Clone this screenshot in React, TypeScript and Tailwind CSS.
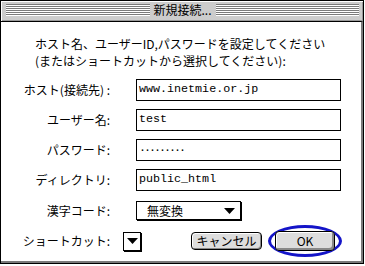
import React from "react";

function Stripes() {
  return (
    <div className="flex-1 flex flex-col">
      {[0, 1, 2, 3, 4, 5].map((i) => (
        <div key={i} className="h-[2px] border-t border-b border-t-[#7a7a7a] border-b-white" />
      ))}
    </div>
  );
}

function Tri({ w = 11, h = 6 }: { w?: number; h?: number }) {
  return (
    <svg width={w} height={h} viewBox={`0 0 ${w} ${h}`}>
      <polygon points={`0,0 ${w},0 ${w / 2},${h}`} fill="#000" />
    </svg>
  );
}

function Row({ label, value, pw }: { label: string; value: string; pw?: boolean }) {
  return (
    <div className="flex items-center h-[22px]">
      <div className="w-[109px] text-right whitespace-nowrap">{label}</div>
      <div className="ml-[26px] w-[205px] h-[22px] border border-black flex items-center pl-[2px] font-['Liberation_Mono',monospace] text-[11.7px] leading-none">
        {pw ? <span className="tracking-[-2px] -mt-[2px]">.........</span> : value}
      </div>
    </div>
  );
}

export default function App() {
  return (
    <div className="w-[365px] h-[266px] bg-white font-['Noto_Sans_CJK_JP',sans-serif] text-black text-[12px]">
      <div className="w-[364px] h-[264px] border border-black flex flex-col">
        <div className="h-[20px] bg-[#cccccc] flex items-start pt-[3px] pl-[5px] pr-[4px] shadow-[inset_1px_1px_0_#fff,inset_-1px_-1px_0_#999]">
          <Stripes />
          <div className="px-[4px] leading-[14px] -mt-[1px]">新規接続...</div>
          <Stripes />
        </div>
        <div className="flex-1 border-t border-black bg-white border-r-2 border-b-2 border-r-[#7a7a7a] border-b-[#7a7a7a] flex flex-col">
          <div className="pt-[13px] pl-[34px] leading-[17px] whitespace-nowrap">
            <div>ホスト名、ユーザーID,パスワードを設定してください</div>
            <div>(またはショートカットから選択してください):</div>
          </div>
          <div className="mt-[10px] flex flex-col gap-[8px]">
            <Row label="ホスト(接続先) :" value="www.inetmie.or.jp" />
            <Row label="ユーザー名:" value="test" />
            <Row label="パスワード:" value="" pw />
            <Row label="ディレクトリ:" value="public_html" />
          </div>
          <div className="mt-[10px] flex items-center h-[19px]">
            <div className="w-[109px] text-right">漢字コード:</div>
            <div className="ml-[26px] w-[105px] h-[19px] border border-black shadow-[1px_1px_0_#000] flex items-center pl-[10px] pr-[5px] justify-between">
              <span className="leading-none">無変換</span>
              <Tri />
            </div>
          </div>
          <div className="mt-[5px] flex items-center h-[32px]">
            <div className="w-[109px] text-right whitespace-nowrap">ショートカット:</div>
            <div className="ml-[13px] w-[18px] h-[19px] border border-black shadow-[1px_1px_0_#000] flex items-center justify-center">
              <Tri w={11} h={6} />
            </div>
            <div className="ml-[50px] w-[71px] h-[18px] border border-black rounded-[4px] bg-[#dddddd] shadow-[inset_1px_1px_0_#fff,inset_-1px_-1px_0_#888] flex items-center justify-center leading-none">
              キャンセル
            </div>
            <div className="ml-[6px] w-[74px] h-[32px] rounded-[50%] border-[3px] border-[#1414c8] flex items-center justify-center">
              <div className="w-[60px] h-[20px] border border-black rounded-[4px] bg-[#dddddd] shadow-[inset_1px_1px_0_#fff,inset_-2px_-2px_0_#888] flex items-center justify-center leading-none">
                OK
              </div>
            </div>
          </div>
        </div>
      </div>
    </div>
  );
}
